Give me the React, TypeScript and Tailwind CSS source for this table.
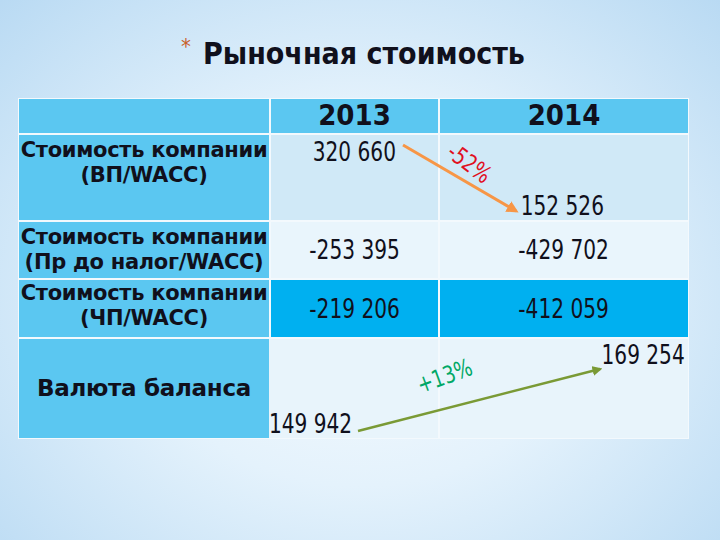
import React from 'react'

const label = "flex flex-col items-center bg-[#5bc7f1] font-['DejaVu_Sans',sans-serif] font-bold text-[21px] leading-[25px] tracking-[-0.3px] whitespace-nowrap"
const num = "font-['DejaVu_Sans_Condensed',sans-serif] text-[26px] leading-none"

function Num({ children, origin = 'origin-center' }: { children: React.ReactNode; origin?: string }) {
  return <span className={"inline-block scale-x-[0.86] " + origin}>{children}</span>
}

export default function App() {
  return (
    <div className="relative w-[720px] h-[540px] overflow-hidden bg-[radial-gradient(ellipse_at_50%_55%,#f8fcfe_0%,#e4f2fc_45%,#b9daf3_100%)] font-['DejaVu_Sans_Condensed','DejaVu_Sans',sans-serif] text-[#10101c]">
      <h1 className="flex justify-center items-start h-[98px] pt-[39px] pr-[14px] text-[30px] font-bold leading-none">
        <span className="text-[#c9602a] text-[22px] font-normal mr-[12px] mt-[-3px]">*</span>
        <span>Рыночная стоимость</span>
      </h1>

      <div className="ml-[18px] w-[671px] grid grid-cols-[250px_167px_248px] grid-rows-[34px_85px_56px_57px_99px] gap-[2px] p-px bg-[#f3f9fd]">
        {/* header */}
        <div className="bg-[#5bc7f1]" />
        <div className="bg-[#5bc7f1] flex items-center justify-center text-[29px] font-bold">2013</div>
        <div className="bg-[#5bc7f1] flex items-center justify-center text-[29px] font-bold">2014</div>

        {/* row 1 */}
        <div className={label + " justify-start pt-[3px]"}>
          <span>Стоимость компании</span>
          <span>(ВП/WACC)</span>
        </div>
        <div className={"bg-[#d0e9f7] flex justify-center pt-[4px] " + num}><Num>320 660</Num></div>
        <div className={"bg-[#d0e9f7] flex justify-center items-end pb-[1px] pr-[4px] " + num}><Num>152 526</Num></div>

        {/* row 2 */}
        <div className={label + " justify-center"}>
          <span>Стоимость компании</span>
          <span>(Пр до налог/WACC)</span>
        </div>
        <div className={"bg-[#e9f5fc] flex justify-center items-center " + num}><Num>-253 395</Num></div>
        <div className={"bg-[#e9f5fc] flex justify-center items-center " + num}><Num>-429 702</Num></div>

        {/* row 3 */}
        <div className={label + " justify-start pt-[1px]"}>
          <span>Стоимость компании</span>
          <span>(ЧП/WACC)</span>
        </div>
        <div className={"bg-[#00b0f0] flex justify-center items-center " + num}><Num>-219 206</Num></div>
        <div className={"bg-[#00b0f0] flex justify-center items-center " + num}><Num>-412 059</Num></div>

        {/* row 4 */}
        <div className="bg-[#5bc7f1] flex items-center justify-center font-['DejaVu_Sans',sans-serif] font-bold text-[23px] tracking-[-0.3px]">Валюта баланса</div>
        <div className={"bg-[#e8f4fb] flex items-end pb-[1px] ml-[-2px] " + num}><Num origin="origin-left">149 942</Num></div>
        <div className={"bg-[#e8f4fb] flex justify-end items-start pt-[3px] pr-[3px] " + num}><Num origin="origin-right">169 254</Num></div>
      </div>

      <svg className="absolute inset-0 pointer-events-none" width="720" height="540">
        <defs>
          <marker id="ah-o" markerWidth="4" markerHeight="4" refX="3" refY="2" orient="auto" markerUnits="strokeWidth">
            <path d="M0,0 L4,2 L0,4 Z" fill="#f79646" />
          </marker>
          <marker id="ah-g" markerWidth="4" markerHeight="4" refX="3" refY="2" orient="auto" markerUnits="strokeWidth">
            <path d="M0,0 L4,2 L0,4 Z" fill="#7a9a35" />
          </marker>
        </defs>
        <line x1="403" y1="145" x2="516" y2="211" stroke="#f79646" strokeWidth="3" markerEnd="url(#ah-o)" />
        <line x1="358" y1="431" x2="600" y2="369" stroke="#7a9a35" strokeWidth="2.5" markerEnd="url(#ah-g)" />
      </svg>

      <span className="absolute left-[450px] top-[137px] rotate-[37deg] origin-left text-[#e0101f] text-[24px] leading-none font-['DejaVu_Sans_Condensed',sans-serif]">
        <span className="inline-block scale-x-[0.86] origin-left">-52%</span>
      </span>
      <span className="absolute left-[418px] top-[374px] rotate-[-20deg] origin-left text-[#00a866] text-[24px] leading-none font-['DejaVu_Sans_Condensed',sans-serif]">
        <span className="inline-block scale-x-[0.86] origin-left">+13%</span>
      </span>
    </div>
  )
}
